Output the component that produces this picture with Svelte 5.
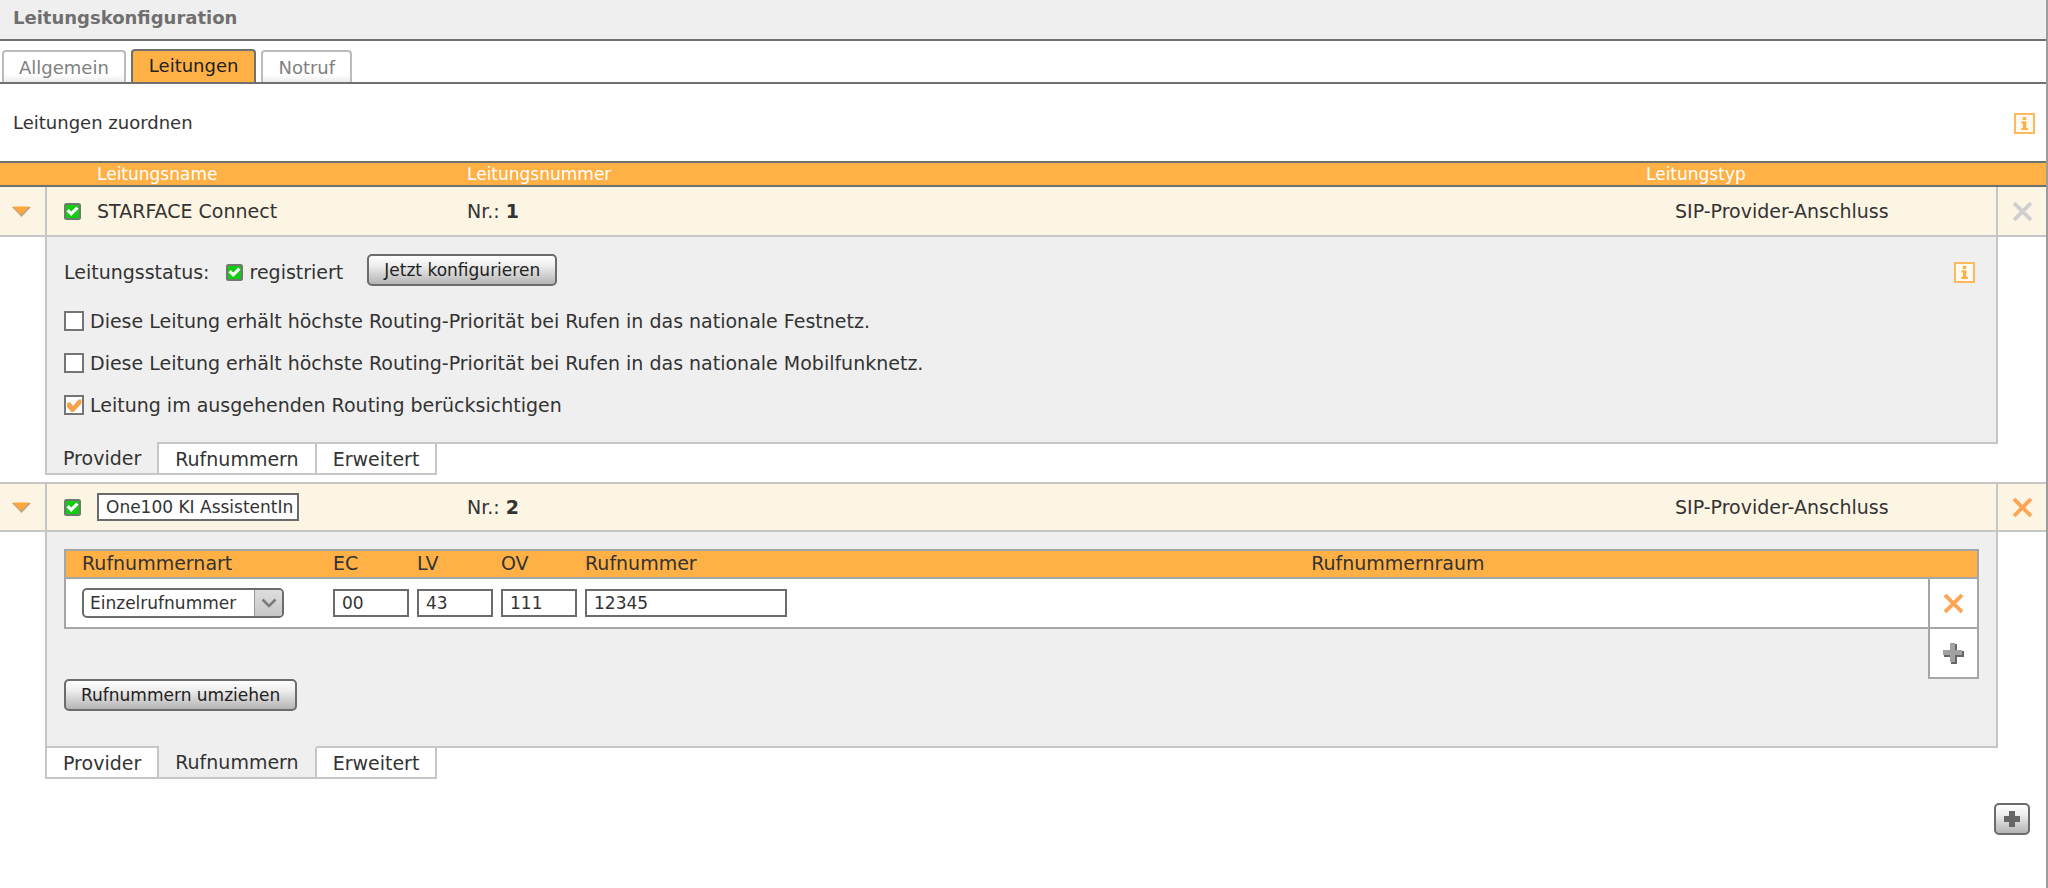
<script>
  const mainTabs = ['Allgemein', 'Leitungen', 'Notruf'];
  const lineTabs = ['Provider', 'Rufnummern', 'Erweitert'];
  let activeMain = $state('Leitungen');
  let firstTab = $state('Provider');
  let secondTab = $state('Rufnummern');
  let options = $state([
    { label: 'Diese Leitung erhält höchste Routing-Priorität bei Rufen in das nationale Festnetz.', on: false },
    { label: 'Diese Leitung erhält höchste Routing-Priorität bei Rufen in das nationale Mobilfunknetz.', on: false },
    { label: 'Leitung im ausgehenden Routing berücksichtigen', on: true }
  ]);
  let lineName = $state('One100 KI AssistentInnen');
  let number = $state({ kind: 'Einzelrufnummer', ec: '00', lv: '43', ov: '111', nr: '12345' });
</script>

{#snippet okIcon()}
  <svg class="ok" viewBox="0 0 17 17" width="17" height="17" aria-hidden="true">
    <rect x="1" y="1" width="15" height="15" rx="1.5" fill="#12cc12" stroke="#6d7a6d" stroke-width="2" />
    <path d="M3.6 7.2 7.2 10.8 13.4 4.6" fill="none" stroke="#fff" stroke-width="3.2" />
  </svg>
{/snippet}

{#snippet infoIcon()}
  <svg viewBox="0 0 21 21" width="21" height="21" aria-hidden="true">
    <rect x="1" y="1" width="19" height="19" fill="#fffaf2" stroke="#ffb95c" stroke-width="2" />
    <path d="M8.8 4h3.4v3H8.8zM7.5 8.3h4.8v6.6h1.6V17H7.3v-2.1H9v-4.5H7.5z" fill="#ffae42" />
  </svg>
{/snippet}

{#snippet crossIcon(color)}
  <svg viewBox="0 0 19 19" width="19" height="19" aria-hidden="true">
    <path d="M1 1 18 18M18 1 1 18" fill="none" stroke={color} stroke-width="3.8" />
  </svg>
{/snippet}

{#snippet arrowIcon()}
  <svg viewBox="0 0 19 11" width="19" height="11" aria-hidden="true">
    <path d="M0 1h19L9.5 11z" fill="#b9a58a" />
    <path d="M1 0.5h16L9 9z" fill="#ffa63a" />
  </svg>
{/snippet}

{#snippet tabBar(active, select)}
  <div class="subtabs">
    {#each lineTabs as tab}
      <button class="subtab" class:active={tab === active} onclick={() => select(tab)}>{tab}</button>
    {/each}
    <div class="rest"></div>
  </div>
{/snippet}

<main>
  <header><h1>Leitungskonfiguration</h1></header>

  <nav>
    {#each mainTabs as tab}
      <button class="tab" class:active={tab === activeMain} onclick={() => (activeMain = tab)}>{tab}</button>
    {/each}
  </nav>

  <div class="intro">
    <span>Leitungen zuordnen</span>
    <button class="plain" aria-label="Info">{@render infoIcon()}</button>
  </div>

  <table class="lines">
    <colgroup>
      <col class="c-toggle" /><col class="c-name" /><col /><col class="c-type" /><col class="c-del" />
    </colgroup>
    <thead>
      <tr><th></th><th class="h-name">Leitungsname</th><th>Leitungsnummer</th><th>Leitungstyp</th><th></th></tr>
    </thead>
    <tbody>
      <tr class="line">
        <td class="toggle"><button class="plain" aria-label="Zuklappen">{@render arrowIcon()}</button></td>
        <td><div class="name">{@render okIcon()}<span>STARFACE Connect</span></div></td>
        <td>Nr.: <b>1</b></td>
        <td class="type">SIP-Provider-Anschluss</td>
        <td class="del"><button class="plain" aria-label="Löschen" disabled>{@render crossIcon('#cfcfcf')}</button></td>
      </tr>
      <tr class="detail">
        <td></td>
        <td colspan="3">
          <section class="panel provider">
            <div class="status">
              <span>Leitungsstatus:</span>
              <span class="state">{@render okIcon()}registriert</span>
              <button class="btn">Jetzt konfigurieren</button>
              <button class="plain info" aria-label="Info">{@render infoIcon()}</button>
            </div>
            <div class="options">
              {#each options as option}
                <label class="option">
                  <span class="box">
                    <input type="checkbox" bind:checked={option.on} />
                    {#if option.on}
                      <svg viewBox="0 0 20 20" width="20" height="20" aria-hidden="true">
                        <path d="M3 8 6 7 9 11 14.5 4.5 17.5 4.5V8.5L9.5 17H7.5L3 12z" fill="#f7a14f" />
                      </svg>
                    {/if}
                  </span>
                  {option.label}
                </label>
              {/each}
            </div>
          </section>
          {@render tabBar(firstTab, (t) => (firstTab = t))}
        </td>
        <td></td>
      </tr>
    </tbody>
    <tbody>
      <tr class="line second">
        <td class="toggle"><button class="plain" aria-label="Zuklappen">{@render arrowIcon()}</button></td>
        <td>
          <div class="name">{@render okIcon()}<input class="wide" aria-label="Leitungsname" bind:value={lineName} /></div>
        </td>
        <td>Nr.: <b>2</b></td>
        <td class="type">SIP-Provider-Anschluss</td>
        <td class="del"><button class="plain" aria-label="Löschen">{@render crossIcon('#ffa452')}</button></td>
      </tr>
      <tr class="detail">
        <td></td>
        <td colspan="3">
          <section class="panel numbers">
            <table class="nums">
              <colgroup>
                <col class="n-kind" /><col class="n-code" /><col class="n-code" /><col class="n-code" />
                <col class="n-nr" /><col /><col class="n-del" />
              </colgroup>
              <thead>
                <tr><th>Rufnummernart</th><th>EC</th><th>LV</th><th>OV</th><th>Rufnummer</th><th>Rufnummernraum</th><th></th></tr>
              </thead>
              <tbody>
                <tr>
                  <td>
                    <span class="select">
                      <select aria-label="Rufnummernart" bind:value={number.kind}>
                        <option>Einzelrufnummer</option>
                        <option>Rufnummernblock</option>
                      </select>
                      <span class="chev">
                        <svg viewBox="0 0 16 10" width="16" height="10" aria-hidden="true">
                          <path d="M1.5 1.5 8 8 14.5 1.5" fill="none" stroke="#7b7b7b" stroke-width="2.6" />
                        </svg>
                      </span>
                    </span>
                  </td>
                  <td><input class="code" aria-label="EC" bind:value={number.ec} /></td>
                  <td><input class="code" aria-label="LV" bind:value={number.lv} /></td>
                  <td><input class="code" aria-label="OV" bind:value={number.ov} /></td>
                  <td><input class="wide" aria-label="Rufnummer" bind:value={number.nr} /></td>
                  <td></td>
                  <td class="ndel"><button class="plain" aria-label="Löschen">{@render crossIcon('#ffa452')}</button></td>
                </tr>
              </tbody>
            </table>
            <button class="plain addnum" aria-label="Rufnummer hinzufügen">
              <svg viewBox="0 0 21 21" width="21" height="21" aria-hidden="true">
                <path d="M8 1h6v7h7v6h-7v7H8v-7H1V8h7z" fill="#666" />
                <path d="M7 0h5v7h7v5h-7v7H7v-7H0V7h7z" fill="#a2a2a2" />
              </svg>
            </button>
            <button class="btn">Rufnummern umziehen</button>
          </section>
          {@render tabBar(secondTab, (t) => (secondTab = t))}
        </td>
        <td></td>
      </tr>
    </tbody>
  </table>

  <footer>
    <button class="btn add" aria-label="Leitung hinzufügen">
      <svg viewBox="0 0 16 16" width="16" height="16" aria-hidden="true">
        <path d="M5 0h6v5h5v6h-5v5H5v-5H0V5h5z" fill="#666" />
      </svg>
    </button>
  </footer>
</main>

<style>
  :global(body) { margin: 0; background: #fff; }
  main {
    box-sizing: border-box;
    min-height: 100vh;
    border-right: 2px solid #9c9c9c;
    font: 18px/24px Verdana, "DejaVu Sans", sans-serif;
    color: #333;
  }
  button, input, select { box-sizing: border-box; margin: 0; font-family: inherit; color: #333; }
  svg { display: block; flex: none; }
  header { padding: 6px 13px 9px; background: #efefef; border-bottom: 2px solid #707070; }
  h1 { margin: 0; font-size: 18px; line-height: 24px; color: #6f6f6f; }

  nav { display: flex; align-items: flex-end; gap: 5px; height: 41px; padding-left: 2px; border-bottom: 2px solid #707070; }
  .tab {
    height: 32px; padding: 1px 15px 0; font-size: 18px; line-height: 24px; color: #808080;
    background: linear-gradient(#fff 75%, #ececec); border: 2px solid #bcbcbc; border-bottom: 0; border-radius: 4px 4px 0 0;
  }
  .tab.active { height: 33px; padding: 0 16px 2px; color: #222; background: #ffb146; border-color: #707070; }

  .plain { display: flex; align-items: center; justify-content: center; padding: 0; border: 0; background: none; }
  .intro { display: flex; align-items: center; justify-content: space-between; height: 76px; padding: 1px 11px 0 13px; }

  table { width: 100%; table-layout: fixed; border-spacing: 0; }
  th, td { padding: 0; text-align: left; }
  th { font-weight: normal; }
  .lines { font-size: 19px; }
  .c-toggle { width: 47px; }
  .c-name { width: 420px; }
  .c-type { width: 352px; }
  .c-del { width: 48px; }
  .lines > thead th {
    height: 22px; font-size: 17px; line-height: 22px; color: #fff; background: #ffb146;
    border-top: 2px solid #707070; border-bottom: 2px solid #707070;
  }
  .lines > thead .h-name { padding-left: 50px; }
  .line > td { height: 48px; background: #fdf5e3; border-bottom: 2px solid #c6c6c6; }
  .line.second > td { height: 46px; border-top: 2px solid #c6c6c6; }
  .toggle { border-right: 2px solid #c6c6c6; }
  .toggle .plain { margin-left: 12px; }
  .name { display: flex; align-items: center; gap: 16px; padding-left: 17px; }
  .line .type { padding-left: 29px; border-right: 2px solid #c6c6c6; }
  .del .plain { margin: 0 auto; }

  .detail > td { vertical-align: top; }
  .detail > td[colspan] { padding-bottom: 7px; }
  .panel {
    box-sizing: border-box; margin-left: -2px; padding-left: 17px; background: #efefef;
    border: solid #c6c6c6; border-width: 0 2px;
  }
  .provider { padding: 17px 21px 25px 17px; }
  .status { display: flex; align-items: center; height: 36px; }
  .status .btn { align-self: flex-start; }
  .state { display: flex; align-items: center; gap: 7px; margin: 0 24px 0 16px; }
  .info { margin-left: auto; }
  .options { display: grid; gap: 18px; padding-top: 19px; }
  .option { display: flex; align-items: center; gap: 6px; }
  .box { position: relative; width: 20px; height: 20px; }
  .box input { display: block; appearance: none; width: 20px; height: 20px; background: #fff; border: 2px solid #757575; }
  .box svg { position: absolute; inset: 0; pointer-events: none; }

  .btn {
    height: 32px; padding: 0 15px; font-size: 17px; line-height: 24px; color: #222;
    background: linear-gradient(#fff, #ededed 35%, #b4b4b4); border: 2px solid #6c6c6c; border-radius: 5px;
  }

  .subtabs { display: flex; height: 33px; margin-left: -2px; }
  .subtab {
    padding: 0 16px; font-size: 19px; line-height: 24px; background: #fff;
    border: 2px solid #c6c6c6; border-left-width: 0;
  }
  .subtab:first-child { border-left-width: 2px; }
  .subtab.active { padding-bottom: 1px; background: #efefef; border-top-color: #efefef; }
  .subtab.active:first-child { border-top-width: 0; padding-top: 2px; }
  .rest { flex: 1; border-top: 2px solid #c6c6c6; }

  .numbers { padding: 17px 17px 35px 17px; }
  .nums { border: 2px solid #a6a6a6; font-size: 19px; }
  .n-kind { width: 267px; }
  .n-code { width: 84px; }
  .n-nr { width: 38%; }
  .n-del { width: 49px; }
  .nums th { height: 26px; line-height: 24px; vertical-align: top; background: #ffb146; border-bottom: 2px solid #a6a6a6; }
  .nums td { height: 48px; background: #fff; }
  .nums th:first-child, .nums td:first-child { padding-left: 16px; }
  .nums .ndel { border-left: 2px solid #a6a6a6; }
  .ndel .plain { margin: 0 auto; }
  input.wide, input.code {
    display: block; height: 28px; padding: 0 0 0 7px; font-size: 17px; background: #fff;
    border: 2px solid #6b6b6b; border-radius: 0; outline: 0;
  }
  input.wide { width: 202px; padding-right: 3px; }
  input.code { width: 76px; }
  .select { position: relative; display: block; width: 202px; height: 30px; }
  select {
    appearance: none; width: 100%; height: 100%; padding: 0 32px 0 6px; font-size: 17px;
    background: #fff; border: 2px solid #6b6b6b; border-radius: 5px;
  }
  .chev {
    position: absolute; top: 2px; right: 2px; bottom: 2px; width: 27px;
    display: flex; align-items: center; justify-content: center; pointer-events: none;
    background: linear-gradient(#dedede, #c6c6c6); border-left: 1px solid #999; border-radius: 0 3px 3px 0;
  }
  .addnum {
    width: 51px; height: 50px; margin-left: auto; background: #fff;
    border: 2px solid #a6a6a6; border-top: 0;
  }

  footer { display: flex; justify-content: flex-end; padding: 17px 16px 0; }
  .add { display: flex; align-items: center; justify-content: center; width: 36px; padding: 0; }
</style>
